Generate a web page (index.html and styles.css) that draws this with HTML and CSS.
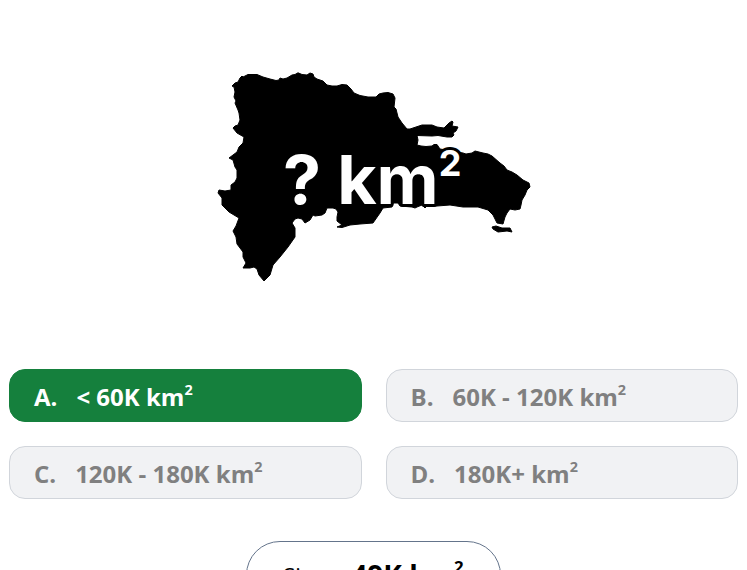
FILE: index.html
```html
<!DOCTYPE html>
<html lang="en">
<head>
    <meta charset="UTF-8">
    <meta name="viewport" content="width=device-width, initial-scale=1.0">
    <title>Guess the Area</title>
    <link rel="stylesheet" href="styles.css">
</head>
<body>
    <main class="quiz">
        <svg class="country" viewBox="210 64 328 226" role="img" aria-label="Country outline">
            <path d="M232 86L235 83L238 82L240 78L242 76L243 77L248 74.5L257 74.5L263 77L270 79L276 80.5L279 80L280 78L283 79L287 78L292 75L295 74.5L298 72.8L302 74.5L307 75L310 73L313 74L314 77L317 79L323 81L327 85L332 86L337 86L342 84.5L347 85L351 89L354 93L360 95.500L368 97L376 97L379 94L383 93L388 92.5L393 94L395 98L394 107L396 109L397 113L398 117L402 123L407 129L410 129L416 127L422 125L432 125L437 127L444 128L447 125L449 123L452 121L453 122L452 126L458 127L456 131L453 133L454 135L452 137L447 137L438 135.500L432 136L417 135.500L418 140L417 145L421 146L426 146.500L432 146L434 144.500L437 144.500L440 149L463 153L466 154L472 153L475 151L483 153L488 154L492 156L500 163L504 166L507 170L512 172L517 175L523 180L529 183L530 187L527 190L525 195L522 200L521 205L520 209L515 210L510 209L507 213L505 217L503 224L497 223L493 215L488 210L478 207L463 207L450 205L437 206L427 206L425 208L422 205L417 207L415 208L412 207L400 206L398 203L393 203L392 207L383 208L380 213L373 223L360 224L350 225L342 227.5L337 227L342 225L337 221L337 217L338 212L336 209L333 208L327 208L325 213L322 215L315 216L313 215L310 220L305 223L302 219L298 218L295 219L292 223L295 228L295 237L288 247L280 257L273 265L270 275L264 281L259 275L257 269L254 267L250 268L243 268L246 263L243 257L243 252L237 244L236 237L233 231L236 226L239 218L229 212L222 205L222 198L218 193L219 190L225 191L231 190L231 185L235 182L237 178L237 170L235 167L233 160L229 158L237 152L239 147L243 143L244 137L237 133L233 128L235 126L238 125L240 120L239 113L238 110L235 103L236 101L234 97L235 92L234 87Z"/>
            <path d="M492 227L496 226L502 228L510 228L512 232L507 231L498 232L493 229Z"/>
            <text class="country-label" x="283" y="204">? km<tspan class="country-power" dy="-28">2</tspan></text>
        </svg>

        <div class="options">
            <button type="button" class="option correct"><span>A.</span><span>&lt; 60K km<sup>2</sup></span></button>
            <button type="button" class="option" disabled><span>B.</span><span>60K - 120K km<sup>2</sup></span></button>
            <button type="button" class="option" disabled><span>C.</span><span>120K - 180K km<sup>2</sup></span></button>
            <button type="button" class="option" disabled><span>D.</span><span>180K+ km<sup>2</sup></span></button>
        </div>

        <p class="answer"><span>Size:</span><strong>49K km<sup>2</sup></strong></p>
    </main>
</body>
</html>
```
FILE: styles.css
```css
* {
    box-sizing: border-box;
}

body {
    margin: 0;
    background: #fff;
    font-family: "Open Sans", "Noto Sans", sans-serif;
}

.quiz {
    display: flex;
    flex-direction: column;
    align-items: center;
    padding: 64px 9px 24px;
}

.country {
    width: 328px;
    max-width: 100%;
    margin-bottom: 79px;
}

.country path {
    stroke: #000;
    stroke-width: 1px;
    stroke-linejoin: round;
}

.country-label {
    font-family: Inter, sans-serif;
    font-size: 68px;
    font-weight: 700;
    fill: #fff;
    stroke: #000;
    stroke-width: 6px;
    stroke-linejoin: round;
    paint-order: stroke;
}

.country-power {
    font-size: 36px;
}

.options {
    display: grid;
    grid-template-columns: 1fr 1fr;
    gap: 24px;
    width: 100%;
    margin-bottom: 42px;
}

.option {
    display: flex;
    align-items: center;
    gap: 19px;
    height: 53px;
    padding: 2px 24px 0;
    border: 1px solid #d1d5db;
    border-radius: 16px;
    background: #f1f2f4;
    color: #808080;
    font-family: inherit;
    font-size: 24px;
    font-weight: 700;
}

.option.correct {
    border-color: #15803d;
    background: #15803d;
    color: #fff;
}

sup {
    font-size: 60%;
    line-height: 0;
    vertical-align: 11px;
}

.answer {
    display: flex;
    align-items: center;
    gap: 22px;
    margin: 0;
    padding: 16px 36px;
    border: 1px solid #64748b;
    border-radius: 40px;
    font-size: 22px;
    line-height: 34px;
}

.answer strong {
    font-size: 28px;
}

.answer sup {
    vertical-align: 13px;
}
```
